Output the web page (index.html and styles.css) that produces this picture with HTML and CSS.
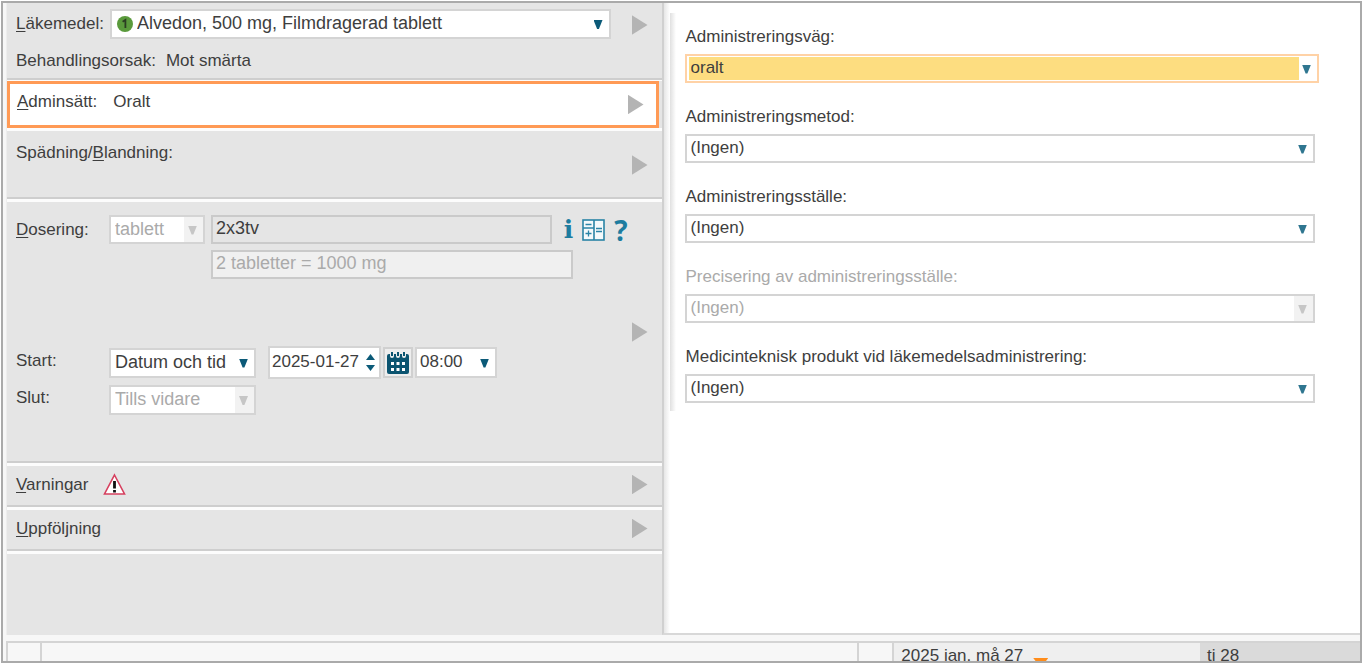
FILE: index.html
```html
<!DOCTYPE html>
<html lang="sv">
<head>
<meta charset="utf-8">
<meta name="viewport" content="width=device-width, initial-scale=1">
<title>Läkemedelsordination</title>
<link rel="stylesheet" href="styles.css">
</head>
<body>
<div class="window">
  <main class="panes">
    <form class="order">
      <section class="section section-drug">
        <div class="section-body">
          <div class="drug-row">
            <label for="drug"><u>L</u>äkemedel:</label>
            <span class="combo combo-drug">
              <select id="drug"><option>Alvedon, 500 mg, Filmdragerad tablett</option></select>
              <svg class="drug-badge" viewBox="0 0 16 16" aria-hidden="true"><circle cx="8" cy="8" r="8" fill="#5a9a3c"/><path d="M5.6 5.8 8.4 4v8" fill="none" stroke="#2b3d22" stroke-width="1.8"/></svg>
            </span>
          </div>
          <p class="reason"><span>Behandlingsorsak:</span><span>Mot smärta</span></p>
        </div>
        <button class="expand" type="button" aria-label="Visa läkemedel"></button>
      </section>

      <section class="section section-active">
        <p class="section-body route"><span><u>A</u>dminsätt:</span><span>Oralt</span></p>
        <button class="expand" type="button" aria-label="Visa adminsätt"></button>
      </section>

      <section class="section section-mix">
        <p class="section-body">Spädning/<u>B</u>landning:</p>
        <button class="expand" type="button" aria-label="Visa spädning"></button>
      </section>

      <section class="section section-dose">
        <div class="section-body">
          <div class="dose-row">
            <label class="row-label" for="dose"><u>D</u>osering:</label>
            <span class="combo combo-unit is-disabled"><select aria-label="Enhet" disabled><option>tablett</option></select></span>
            <input class="field dose-input" id="dose" type="text" value="2x3tv">
            <span class="tools">
              <button class="tool tool-info" type="button" aria-label="Information">i</button>
              <button class="tool" type="button" aria-label="Dosberäkning">
                <svg width="23" height="22" viewBox="0 0 23 22" fill="none" stroke="#2a84a6"><rect x="1" y="1" width="21" height="20" fill="#f4f9fb" stroke-width="1.6"/><path d="M12 1v20M1 9h11" stroke-width="1.6"/><path d="M3.500 5.500h6M3.500 14.500h6M6.500 11.500v6M14 9.500h6M14 12.500h6" stroke-width="1.3"/></svg>
              </button>
              <button class="tool tool-help" type="button" aria-label="Hjälp">?</button>
            </span>
          </div>
          <input class="field dose-total" type="text" aria-label="Total dos" value="2 tabletter = 1000 mg" disabled>
          <div class="time-row time-start">
            <label class="row-label" for="start">Start:</label>
            <span class="combo combo-period"><select id="start"><option>Datum och tid</option></select></span>
            <span class="date">
              <input type="text" aria-label="Startdatum" value="2025-01-27">
              <span class="spinner">
                <button class="spin spin-up" type="button" aria-label="Öka"></button>
                <button class="spin spin-down" type="button" aria-label="Minska"></button>
              </span>
            </span>
            <button class="calendar" type="button" aria-label="Öppna kalender">
              <svg width="24" height="24" viewBox="0 0 24 24"><path d="M3 3h1v2a2 2 0 0 0 4 0V3h2v2a2 2 0 0 0 4 0V3h2v2a2 2 0 0 0 4 0V3h1q2 0 2 2v16q0 2-2 2H3q-2 0-2-2V5q0-2 2-2z" fill="#0b5470"/><path d="M6 1v4M12 1v4M18 1v4" stroke="#0b5470" stroke-width="2"/><path d="M5 11h3v3H5zM10.500 11h3v3h-3zM16 11h3v3h-3zM5 17h3v3H5zM10.500 17h3v3h-3zM16 17h3v3h-3z" fill="#fff"/></svg>
            </button>
            <span class="combo combo-clock"><select aria-label="Starttid"><option>08:00</option></select></span>
          </div>
          <div class="time-row">
            <label class="row-label" for="stop">Slut:</label>
            <span class="combo combo-period is-disabled"><select id="stop" disabled><option>Tills vidare</option></select></span>
          </div>
        </div>
        <button class="expand" type="button" aria-label="Visa dosering"></button>
      </section>

      <section class="section section-line">
        <p class="section-body warnings"><span><u>V</u>arningar</span>
          <svg width="23" height="23" viewBox="0 0 23 23" aria-hidden="true"><path d="M11.500 2 21.500 21h-20z" fill="#fff" stroke="#d6405f" stroke-width="1.6"/><path d="M11.500 8v7.500M11.500 17v2.500" stroke="#111" stroke-width="2.800"/></svg>
        </p>
        <button class="expand" type="button" aria-label="Visa varningar"></button>
      </section>

      <section class="section section-line">
        <p class="section-body"><u>U</u>ppföljning</p>
        <button class="expand" type="button" aria-label="Visa uppföljning"></button>
      </section>
    </form>

    <div class="detail">
      <form class="detail-form">
        <div class="group is-focused">
          <label for="adm-route">Administreringsväg:</label>
          <span class="combo"><select id="adm-route"><option>oralt</option></select></span>
        </div>
        <div class="group">
          <label for="adm-method">Administreringsmetod:</label>
          <span class="combo"><select id="adm-method"><option>(Ingen)</option></select></span>
        </div>
        <div class="group">
          <label for="adm-site">Administreringsställe:</label>
          <span class="combo"><select id="adm-site"><option>(Ingen)</option></select></span>
        </div>
        <div class="group">
          <label class="label-disabled" for="adm-precise">Precisering av administreringsställe:</label>
          <span class="combo is-disabled"><select id="adm-precise" disabled><option>(Ingen)</option></select></span>
        </div>
        <div class="group">
          <label for="adm-device">Medicinteknisk produkt vid läkemedelsadministrering:</label>
          <span class="combo"><select id="adm-device"><option>(Ingen)</option></select></span>
        </div>
      </form>
    </div>
  </main>

  <footer class="timeline">
    <div class="cell"></div>
    <div class="cell"></div>
    <div class="cell"></div>
    <div class="cell cell-today"><span>2025 jan. må 27</span><span class="marker"></span></div>
    <div class="cell cell-next">ti 28</div>
  </footer>
</div>
</body>
</html>
```

FILE: styles.css
```css
* { box-sizing: border-box; }

body {
  margin: 0;
  background: #fff;
  color: #3e3e3e;
  font-family: "Liberation Sans", Arial, sans-serif;
  font-size: 17px;
  line-height: 20px;
}

p { margin: 0; }

button {
  padding: 0;
  border: 0;
  background: none;
  color: inherit;
  font: inherit;
}

input, select {
  width: 100%;
  margin: 0;
  color: inherit;
  font: inherit;
}

u { text-underline-offset: 2px; }

.window {
  display: flex;
  flex-direction: column;
  height: 100vh;
  border: 1px solid #fff;
  overflow: hidden;
  outline: 2px solid #aaa;
  outline-offset: -3px;
  padding: 2px 2px 2px 5px;
  background: #f7f7f7;
}

.panes {
  display: grid;
  grid-template-columns: minmax(0, 656fr) minmax(0, 699fr);
  flex: 1;
  min-height: 0;
}

/* Order sections */

.order {
  display: flex;
  flex-direction: column;
  background: #e5e5e5;
  border-left: 1px solid #eee;
}

.section {
  display: flex;
  align-items: center;
  padding: 0 14px 0 9px;
  border-bottom: 3px solid #fcfcfc;
  box-shadow: inset 0 -2px #cecece;
}

.section-body { flex: 1; min-width: 0; }

.expand {
  flex: none;
  width: 16px;
  height: 20px;
  background: #b4b4b4;
  clip-path: polygon(0 0, 100% 50%, 0 100%);
}

.section-drug {
  align-items: flex-start;
  padding-top: 6px;
  padding-bottom: 9px;
  border-bottom-width: 1px;
}

.section-drug .expand { margin-top: 6px; }

.drug-row {
  display: flex;
  align-items: center;
  gap: 6px;
  margin-right: 21px;
}

.reason {
  display: flex;
  gap: 10px;
  margin-top: 12px;
}

.section-active {
  margin-right: 3px;
  padding: 0 12px 0 7px;
  min-height: 47px;
  border: 3px solid #ff9a55;
  background: #fff;
  box-shadow: none;
}

.route {
  display: flex;
  gap: 16px;
  align-self: flex-start;
  padding-top: 8px;
}

.section-mix {
  min-height: 74px;
  border-top: 3px solid #fcfcfc;
}

.section-mix .section-body {
  align-self: flex-start;
  padding-top: 12px;
}

.section-dose { padding-top: 13px; padding-bottom: 48px; }
.section-dose .expand { margin: 34px 0 0; }

.section-line { min-height: 44px; padding-bottom: 4px; }

.warnings {
  display: flex;
  align-items: center;
  gap: 15px;
}

/* Drop-downs and text fields */

.combo {
  position: relative;
  display: block;
  height: 30px;
}

.combo select {
  height: 100%;
  padding: 0 24px 2px 4px;
  border: 2px solid #d4d4d4;
  border-radius: 0;
  background: #fff;
  appearance: none;
}

.combo::after {
  content: "";
  position: absolute;
  top: 50%;
  right: 8px;
  width: 9px;
  height: 9px;
  margin-top: -4px;
  background: #0b5a78;
  clip-path: polygon(0 0, 100% 0, 60% 100%, 40% 100%);
  pointer-events: none;
}

.is-disabled select {
  background: linear-gradient(#f2f2f2, #f2f2f2) no-repeat right / 19px 100%, #fff;
  color: #aaa;
  opacity: 1;
}

.is-disabled::after { background: #c6c6c6; }

.combo-drug { flex: 1; }

.combo-drug select { padding-left: 25px; font-size: 18px; }

.drug-badge {
  position: absolute;
  top: 7px;
  left: 7px;
  width: 16px;
  height: 16px;
}

.field {
  height: 29px;
  padding: 0 3px 2px;
  border: 2px solid #cacaca;
  background: #e5e5e5;
  font-size: 18px;
}

.row-label { flex: none; width: 93px; }

.dose-row { display: flex; align-items: center; }

.combo-unit { flex: none; width: 96px; height: 29px; margin-right: 6px; }

.combo-unit select, .combo-period select, .combo-clock select { font-size: 18px; padding-right: 20px; }

.dose-input { flex: 1; min-width: 0; }

.dose-total {
  display: block;
  width: calc(100% - 254px);
  margin: 6px 59px 0 195px;
  background: #f0f0f0;
  color: #aaa;
}

.tools {
  display: flex;
  align-items: center;
  gap: 9px;
  margin: 0 4px 0 12px;
  color: #1d7c9f;
}

.tool { display: block; height: 24px; }
.tool svg { display: block; }

.tool-info {
  font: bold 25px/22px "DejaVu Serif", serif;
}

.tool-help {
  font: bold 28px/22px "Open Sans", sans-serif;
}

.time-row { display: flex; align-items: center; margin-top: 6px; }
.time-row .row-label { padding-bottom: 4px; }
.time-start { margin-top: 67px; }

.combo-period { width: 147px; }

.date {
  display: flex;
  align-items: center;
  width: 113px;
  height: 33px;
  margin: 0 2px 0 12px;
  padding-right: 4px;
  border: 2px solid #d4d4d4;
  background: #fff;
}

.date input {
  flex: 1;
  min-width: 0;
  height: 28px;
  padding: 0 0 2px 2px;
  border: 0;
  background: none;
}

.spinner { display: grid; gap: 5px; }

.spin { width: 9px; height: 6px; background: #0b5a78; }
.spin-up { clip-path: polygon(50% 0, 100% 100%, 0 100%); }
.spin-down { clip-path: polygon(0 0, 100% 0, 50% 100%); }

.calendar {
  display: grid;
  place-items: center;
  width: 30px;
  height: 31px;
  margin-right: 2px;
  border: 2px solid #d0d0d0;
  background: #eee;
}

.combo-clock { width: 82px; height: 31px; }
.combo-clock select { padding-left: 3px; font-size: 17px; }

/* Detail pane */

.detail {
  padding: 10px 0 0 6px;
  border-left: 2px solid #d0d0d0;
  border-bottom: 2px solid #d8d8d8;
  background: linear-gradient(to right, #e6e6e6, #fff 6px);
}

.detail-form {
  display: grid;
  gap: 24px;
  padding: 14px 45px 8px 15px;
  background: linear-gradient(to right, #e0e0e0, #fff 6px);
}

.group { display: grid; gap: 7px; }

.group label { padding-left: 1px; }

.group .combo { height: 29px; }

.label-disabled { color: #aaa; }

.group.is-focused { margin-right: -4px; }

.is-focused select {
  border-color: #ffd2a6;
  background: linear-gradient(#fddd80, #fddd80) no-repeat 2px 1px / calc(100% - 20px) calc(100% - 2px), #fff;
}

.detail .combo:not(.is-disabled)::after { background: #2f7690; }

/* Timeline header */

.timeline {
  display: grid;
  grid-template-columns: minmax(0, 34fr) minmax(0, 818fr) minmax(0, 35fr) minmax(0, 308fr) minmax(0, 160fr);
  height: 20px;
  margin-top: 6px;
  border-top: 2px solid #d4d4d4;
  overflow: hidden;
}

.cell {
  height: 30px;
  padding: 3px 0 0 7px;
  border-left: 2px solid #d4d4d4;
}

.cell-today {
  display: flex;
  gap: 10px;
  background: #efefef;
}

.marker {
  width: 15px;
  height: 10px;
  margin-top: 12px;
  background: #ff8c1a;
  clip-path: polygon(0 0, 100% 0, 50% 100%);
}

.cell-next { border-left: 0; background: #dadada; }
```
